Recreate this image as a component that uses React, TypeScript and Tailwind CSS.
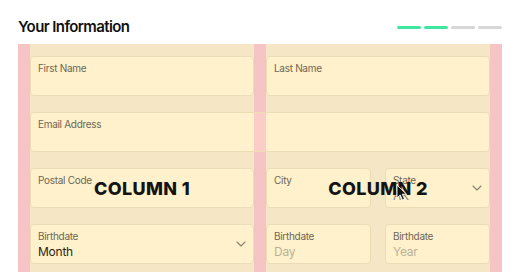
import React from 'react';

const font = { fontFamily: 'Inter, "Noto Sans", sans-serif' };

function Chevron() {
  return (
    <svg width="10" height="6" viewBox="0 0 10 6" fill="none" className="absolute right-[7px] top-1/2 -translate-y-1/2">
      <path d="M1 1l4 4 4-4" stroke="#8a8170" strokeWidth="1.1" strokeLinecap="round" strokeLinejoin="round" />
    </svg>
  );
}

function Field({
  label,
  value,
  placeholder,
  select,
  muted,
  className = '',
  children,
}: {
  label: string;
  value?: string;
  placeholder?: string;
  select?: boolean;
  muted?: boolean;
  className?: string;
  children?: React.ReactNode;
}) {
  return (
    <div
      className={`relative h-[40px] rounded-[4px] border border-[#ecdcb3] bg-[#fef1cb] pl-[7px] pt-[5px] ${className}`}
    >
      <div className="text-[10px] leading-[12px] tracking-[-0.03em] text-[#6e6654]">{label}</div>
      {value && (
        <div
          className={`mt-[3px] text-[12px] leading-[14px] tracking-[-0.02em] ${muted ? 'text-[#8d8470]' : 'text-[#2b2519]'}`}
        >
          {value}
        </div>
      )}
      {placeholder && (
        <div className="mt-[3px] text-[12px] leading-[14px] tracking-[-0.02em] text-[#bcb196]">{placeholder}</div>
      )}
      {select && <Chevron />}
      {children}
    </div>
  );
}

export default function App() {
  const steps = [true, true, false, false];

  return (
    <div className="relative h-[272px] w-[520px] overflow-hidden bg-white" style={font}>
      <header className="flex h-[44px] items-center justify-between px-[18px] pt-[10px]">
        <h1 className="text-[15px] font-semibold tracking-[-0.04em] text-[#111]">Your Information</h1>
        <div className="flex gap-[3px]">
          {steps.map((done, i) => (
            <div
              key={i}
              className={`h-[3px] w-[24px] rounded-full ${done ? 'bg-[#3fe6a0]' : 'bg-[#d6d6d6]'}`}
            />
          ))}
        </div>
      </header>

      <div className="relative mx-[18px] h-[260px] bg-[#f6c4c4]">
        {/* column backgrounds */}
        <div className="absolute inset-0 grid grid-cols-2 gap-3 px-3">
          <div className="bg-[#f5e7c5]" />
          <div className="bg-[#f5e7c5]" />
        </div>

        {/* form */}
        <div className="relative grid grid-cols-2 gap-x-3 gap-y-4 px-3 pt-3">
          <Field label="First Name" />
          <Field label="Last Name" />
          <Field label="Email Address" className="col-span-2">
            <div className="absolute bottom-0 left-[223px] top-0 w-[12px] bg-[#fcccc6]" />
          </Field>
          <Field label="Postal Code" />
          <div className="grid grid-cols-2 gap-[14px]">
            <Field label="City" />
            <Field label="State" value="AK" select muted />
          </div>
          <Field label="Birthdate" value="Month" select />
          <div className="grid grid-cols-2 gap-[14px]">
            <Field label="Birthdate" placeholder="Day" />
            <Field label="Birthdate" placeholder="Year" />
          </div>
        </div>

        {/* column labels overlay */}
        <div className="pointer-events-none absolute inset-0 grid grid-cols-2 gap-3 px-3">
          <div className="flex justify-center pt-[133px]">
            <span className="text-[18px] font-extrabold leading-[24px] tracking-[0.02em] text-[#141414]">COLUMN 1</span>
          </div>
          <div className="flex justify-center pt-[133px]">
            <span className="text-[18px] font-extrabold leading-[24px] tracking-[0.02em] text-[#141414]">COLUMN 2</span>
          </div>
        </div>

        {/* mouse cursor */}
        <svg width="12" height="17" viewBox="0 0 12 17" className="absolute left-[378px] top-[140px]">
          <path d="M1 1v13l3.2-3 2.3 5 2-0.9-2.2-4.9H10.5z" fill="#111" stroke="#fff" strokeWidth="0.9" strokeLinejoin="round" />
        </svg>
      </div>
    </div>
  );
}
